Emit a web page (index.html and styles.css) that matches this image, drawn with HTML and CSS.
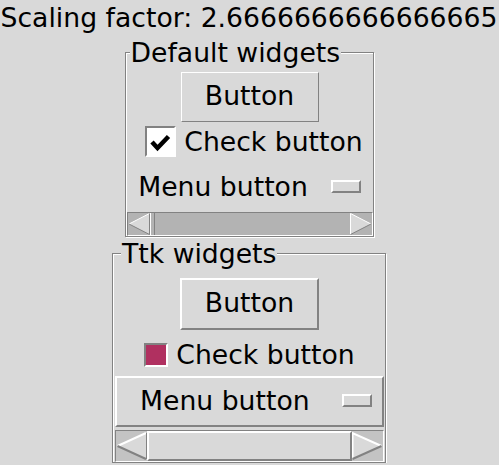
FILE: index.html
```html
<!DOCTYPE html>
<html lang="en">

<head>
  <meta charset="UTF-8" />
  <meta name="viewport" content="width=device-width, initial-scale=1.0" />
  <title>Scaling factor</title>
  <link rel="stylesheet" href="styles.css">
</head>

<body>

  <div class="scaling">Scaling factor: 2.6666666666666665</div>

  <!-- classic tk widgets -->
  <fieldset class="group group-tk">
    <legend>Default widgets</legend>
    <div class="tk-button">Button</div>
    <div class="tk-check">
      <span class="tk-check-box">
        <svg width="27" height="27" viewBox="0 0 27 27">
          <path d="M5 14 L10.5 20 L21.5 8.5" fill="none" stroke="#000" stroke-width="4.5" />
        </svg>
      </span>
      <span>Check button</span>
    </div>
    <div class="tk-menu">
      <span>Menu button</span>
      <span class="indicator"></span>
    </div>
    <div class="tk-scroll">
      <svg width="22" height="22" viewBox="0 0 22 22">
        <polygon points="1,11 21.5,0.5 21.5,21.5" fill="#d9d9d9" />
        <path d="M1 11 L21.5 0.5" stroke="#fff" />
        <path d="M1 11 L21.5 21.5 L21.5 0.5" fill="none" stroke="#828282" />
      </svg>
      <span class="tk-slider"></span>
      <span class="trough"></span>
      <svg width="22" height="22" viewBox="0 0 22 22">
        <polygon points="0.5,0.5 21,11 0.5,21.5" fill="#d9d9d9" />
        <path d="M0.5 21.5 L0.5 0.5 L21 11" fill="none" stroke="#fff" />
        <path d="M0.5 21.5 L21 11" stroke="#828282" />
      </svg>
    </div>
  </fieldset>

  <!-- themed ttk widgets -->
  <fieldset class="group group-ttk">
    <legend>Ttk widgets</legend>
    <div class="ttk-button">Button</div>
    <div class="ttk-check">
      <span class="ttk-check-box"></span>
      <span>Check button</span>
    </div>
    <div class="ttk-menu">
      <span>Menu button</span>
      <span class="indicator"></span>
    </div>
    <div class="ttk-scroll">
      <svg width="31" height="30" viewBox="0 0 31 30">
        <polygon points="1.5,15 30,2 30,28" fill="#d9d9d9" />
        <path d="M1.5 15 L30 2" stroke="#fff" stroke-width="2" />
        <path d="M1.5 15 L30 28" stroke="#828282" stroke-width="2" />
        <path d="M30.5 2 L30.5 28" stroke="#828282" />
      </svg>
      <span class="ttk-thumb"></span>
      <svg width="31" height="30" viewBox="0 0 31 30">
        <polygon points="0.5,2 29.5,15 0.5,28" fill="#d9d9d9" />
        <path d="M0.5 28 L0.5 2 L29.5 15" fill="none" stroke="#fff" stroke-width="2" />
        <path d="M0.5 28 L29.5 15" stroke="#828282" stroke-width="2" />
      </svg>
    </div>
  </fieldset>

</body>

</html>
```

FILE: styles.css
```css
* {
  box-sizing: border-box;
}
body {
  margin: 0;
  padding-right: 1px;
  background-color: #d9d9d9;
  font-family: 'DejaVu Sans', sans-serif;
  font-size: 26.67px;
  line-height: 31px;
  color: #000;
  overflow: hidden;
}
.scaling {
  padding-top: 2px;
  text-align: center;
  white-space: nowrap;
}

/* labelframes */
.group {
  display: flex;
  flex-direction: column;
  align-items: center;
  margin: 4px auto 0;
  border: 1px solid #828282;
  box-shadow: inset 1px 1px 0 #fff, 1px 1px 0 #fff;
  min-inline-size: 0;
}
.group legend {
  padding: 0 1px;
  background-color: #d9d9d9;
  line-height: 31px;
}
.group-tk {
  width: 249px;
  padding: 0 0 0 1px;
}
.group-tk legend {
  margin-left: 3px;
}
.group-ttk {
  width: 274px;
  margin-top: 1px;
  padding: 0 1px 0 2px;
}
.group-ttk legend {
  margin-left: 6px;
}

.indicator {
  width: 30px;
  height: 13px;
  border: 2px solid;
  border-color: #fff #828282 #828282 #fff;
}

/* default widgets */
.tk-button {
  width: 138px;
  margin-top: 4px;
  padding: 7px 0 10px;
  border: 1px solid;
  border-color: #fff #828282 #828282 #fff;
  text-align: center;
}
.tk-check {
  display: flex;
  align-items: center;
  gap: 8px;
  margin: 4px 0 0 9px;
}
.tk-check-box {
  display: flex;
  width: 31px;
  height: 31px;
  border: 2px solid;
  border-color: #828282 #fff #fff #828282;
  background-color: #fff;
}
.tk-menu {
  display: flex;
  align-items: center;
  gap: 23px;
  margin-top: 14px;
}
.tk-scroll {
  align-self: stretch;
  display: flex;
  height: 24px;
  margin-top: 10px;
  border: 1px solid;
  border-color: #828282 #fff #fff #828282;
  background-color: #b3b3b3;
}
.tk-slider {
  width: 5px;
  border-left: 1px solid #fff;
  border-right: 1px solid #828282;
}
.trough {
  flex: 1;
}

/* ttk widgets */
.ttk-button {
  width: 139px;
  margin-top: 9px;
  padding: 7px 0 10px;
  border: 2px solid;
  border-color: #fff #828282 #828282 #fff;
  text-align: center;
}
.ttk-check {
  display: flex;
  align-items: center;
  gap: 8px;
  margin-top: 9px;
}
.ttk-check-box {
  width: 24px;
  height: 24px;
  border: 2px solid;
  border-color: #828282 #fff #fff #828282;
  background-color: #b03060;
}
.ttk-menu {
  align-self: stretch;
  display: flex;
  align-items: center;
  justify-content: space-between;
  margin-top: 6px;
  padding: 7px 10px 9px 23px;
  border: 2px solid;
  border-color: #fff #828282 #828282 #fff;
}
.ttk-scroll {
  align-self: stretch;
  display: flex;
  height: 32px;
  margin-top: 3px;
  border: 1px solid;
  border-color: #828282 #fff #fff #828282;
  background-color: #c3c3c3;
}
.ttk-thumb {
  flex: 1;
  border: 2px solid;
  border-color: #fff #828282 #828282 #fff;
  background-color: #d9d9d9;
}
```
